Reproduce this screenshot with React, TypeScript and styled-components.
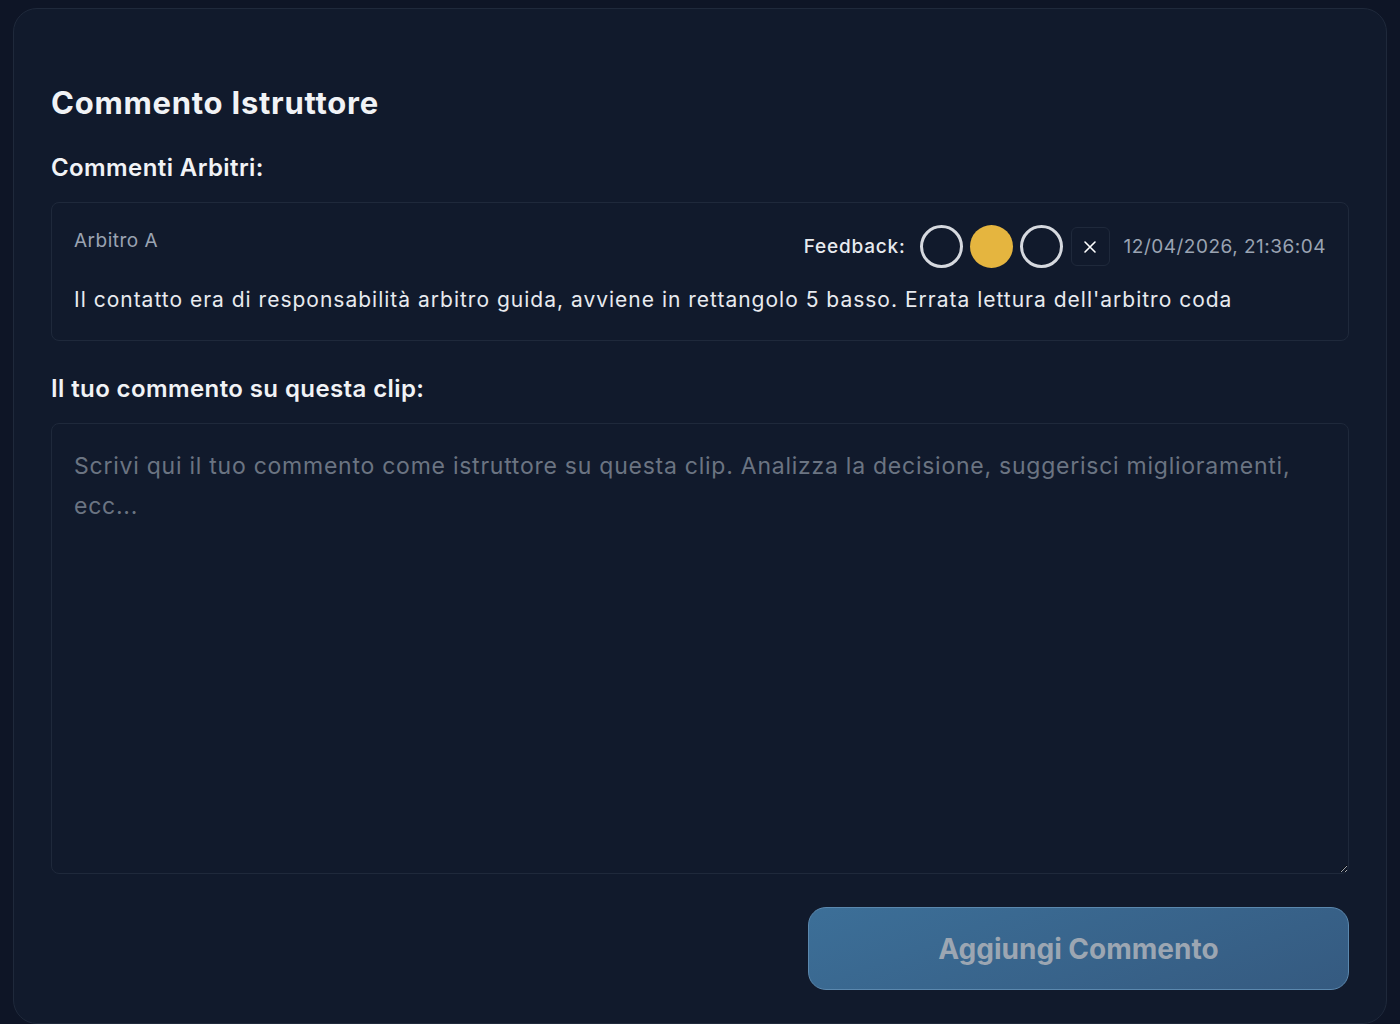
import * as React from "react";
import styled, { createGlobalStyle } from "styled-components";

const Colors = {
    Page: "#0e1526",
    Card: "#111a2c",
    Border: "#1f293b",
    Text: "#f1f3f6",
    Body: "#e8eaef",
    Muted: "#9aa3b2",
    Placeholder: "#6b7482",
    Gold: "#e5b53f",
}

const GlobalStyle = createGlobalStyle`
    html, body {
        margin: 0;
        padding: 0;
        background: ${Colors.Page};
        font-family: Inter, "Liberation Sans", sans-serif;
    }
    * { box-sizing: border-box; }
`

const Page = styled.div`
    padding: 8px 13px 0 13px;
    height: 1024px;
    overflow: hidden;
`

const Card = styled.section`
    background: ${Colors.Card};
    border: 1px solid ${Colors.Border};
    border-radius: 24px;
    padding: 76px 37px 33px 37px;
    display: flex;
    flex-direction: column;
`

const Title = styled.h2`
    margin: 0;
    font-size: 31px;
    line-height: 36px;
    font-weight: 700;
    color: ${Colors.Text};
    letter-spacing: 0.75px;
`

const Label = styled.h3<{ $top: number }>`
    margin: ${p => p.$top}px 0 18px 0;
    font-size: 24px;
    line-height: 32px;
    font-weight: 600;
    color: ${Colors.Text};
    letter-spacing: 0.4px;
`

const CommentBox = styled.div`
    border: 1px solid ${Colors.Border};
    border-radius: 8px;
    padding: 22px 22px 26px 22px;
    display: flex;
    flex-direction: column;
    gap: 18px;
`

const CommentHeader = styled.div`
    display: flex;
    justify-content: space-between;
    align-items: flex-start;
`

const Author = styled.span`
    font-size: 19px;
    line-height: 28px;
    margin-top: 2px;
    color: ${Colors.Muted};
    letter-spacing: 0.5px;
`

const FeedbackRow = styled.div`
    display: flex;
    align-items: center;
    gap: 7px;
`

const FeedbackLabel = styled.span`
    font-size: 19px;
    font-weight: 500;
    color: ${Colors.Body};
    margin-right: 7px;
    letter-spacing: 0.8px;
`

const Dot = styled.span<{ $on?: boolean }>`
    width: 43px;
    height: 43px;
    border-radius: 50%;
    border: ${p => p.$on ? "none" : "3px solid #d6d9df"};
    background: ${p => p.$on ? Colors.Gold : "transparent"};
`

const ClearButton = styled.button`
    width: 39px;
    height: 39px;
    margin-left: 1px;
    border: 1px solid ${Colors.Border};
    border-radius: 6px;
    background: transparent;
    color: #ffffff;
    display: flex;
    align-items: center;
    justify-content: center;
    padding: 0;
`

const Stamp = styled.span`
    font-size: 19px;
    color: ${Colors.Muted};
    margin-left: 7px;
    letter-spacing: 0.5px;
`

const CommentText = styled.p`
    margin: 0;
    font-size: 21px;
    line-height: 28px;
    color: ${Colors.Body};
    letter-spacing: 1px;
`

const TextArea = styled.textarea`
    width: 100%;
    height: 451px;
    background: ${Colors.Card};
    border: 1px solid ${Colors.Border};
    border-radius: 8px;
    padding: 22px 22px;
    font-family: Inter, "Liberation Sans", sans-serif;
    font-size: 23px;
    line-height: 40px;
    letter-spacing: 0.75px;
    color: ${Colors.Body};
    outline: none;
    display: block;

    &::placeholder {
        color: ${Colors.Placeholder};
    }
`

const Footer = styled.div`
    display: flex;
    justify-content: flex-end;
    margin-top: 33px;
`

const SubmitButton = styled.button`
    width: 541px;
    height: 83px;
    border-radius: 18px;
    border: 1px solid #5b88ae;
    background: linear-gradient(160deg, #3c6f98 0%, #355a80 100%);
    color: #9ca6b2;
    font-family: Inter, "Liberation Sans", sans-serif;
    font-size: 28px;
    font-weight: 700;
    cursor: not-allowed;
`

const CloseIcon = () =>
    <svg width="18" height="18" viewBox="0 0 18 18" fill="none" stroke="currentColor" strokeWidth="1.6" strokeLinecap="round">
        <path d="M4 4 L14 14 M14 4 L4 14" />
    </svg>

export default function App(): JSX.Element {
    const [text, setText] = React.useState("")

    return <Page>
        <GlobalStyle />
        <Card>
            <Title>Commento Istruttore</Title>
            <Label $top={31}>Commenti Arbitri:</Label>
            <CommentBox>
                <CommentHeader>
                    <Author>Arbitro A</Author>
                    <FeedbackRow>
                        <FeedbackLabel>Feedback:</FeedbackLabel>
                        <Dot />
                        <Dot $on />
                        <Dot />
                        <ClearButton><CloseIcon /></ClearButton>
                        <Stamp>12/04/2026, 21:36:04</Stamp>
                    </FeedbackRow>
                </CommentHeader>
                <CommentText>Il contatto era di responsabilità arbitro guida, avviene in rettangolo 5 basso. Errata lettura dell'arbitro coda</CommentText>
            </CommentBox>
            <Label $top={32}>Il tuo commento su questa clip:</Label>
            <TextArea
                value={text}
                onChange={(e) => setText(e.target.value)}
                placeholder="Scrivi qui il tuo commento come istruttore su questa clip. Analizza la decisione, suggerisci miglioramenti, ecc..."
            />
            <Footer>
                <SubmitButton disabled={!text.trim()}>Aggiungi Commento</SubmitButton>
            </Footer>
        </Card>
    </Page>
}
